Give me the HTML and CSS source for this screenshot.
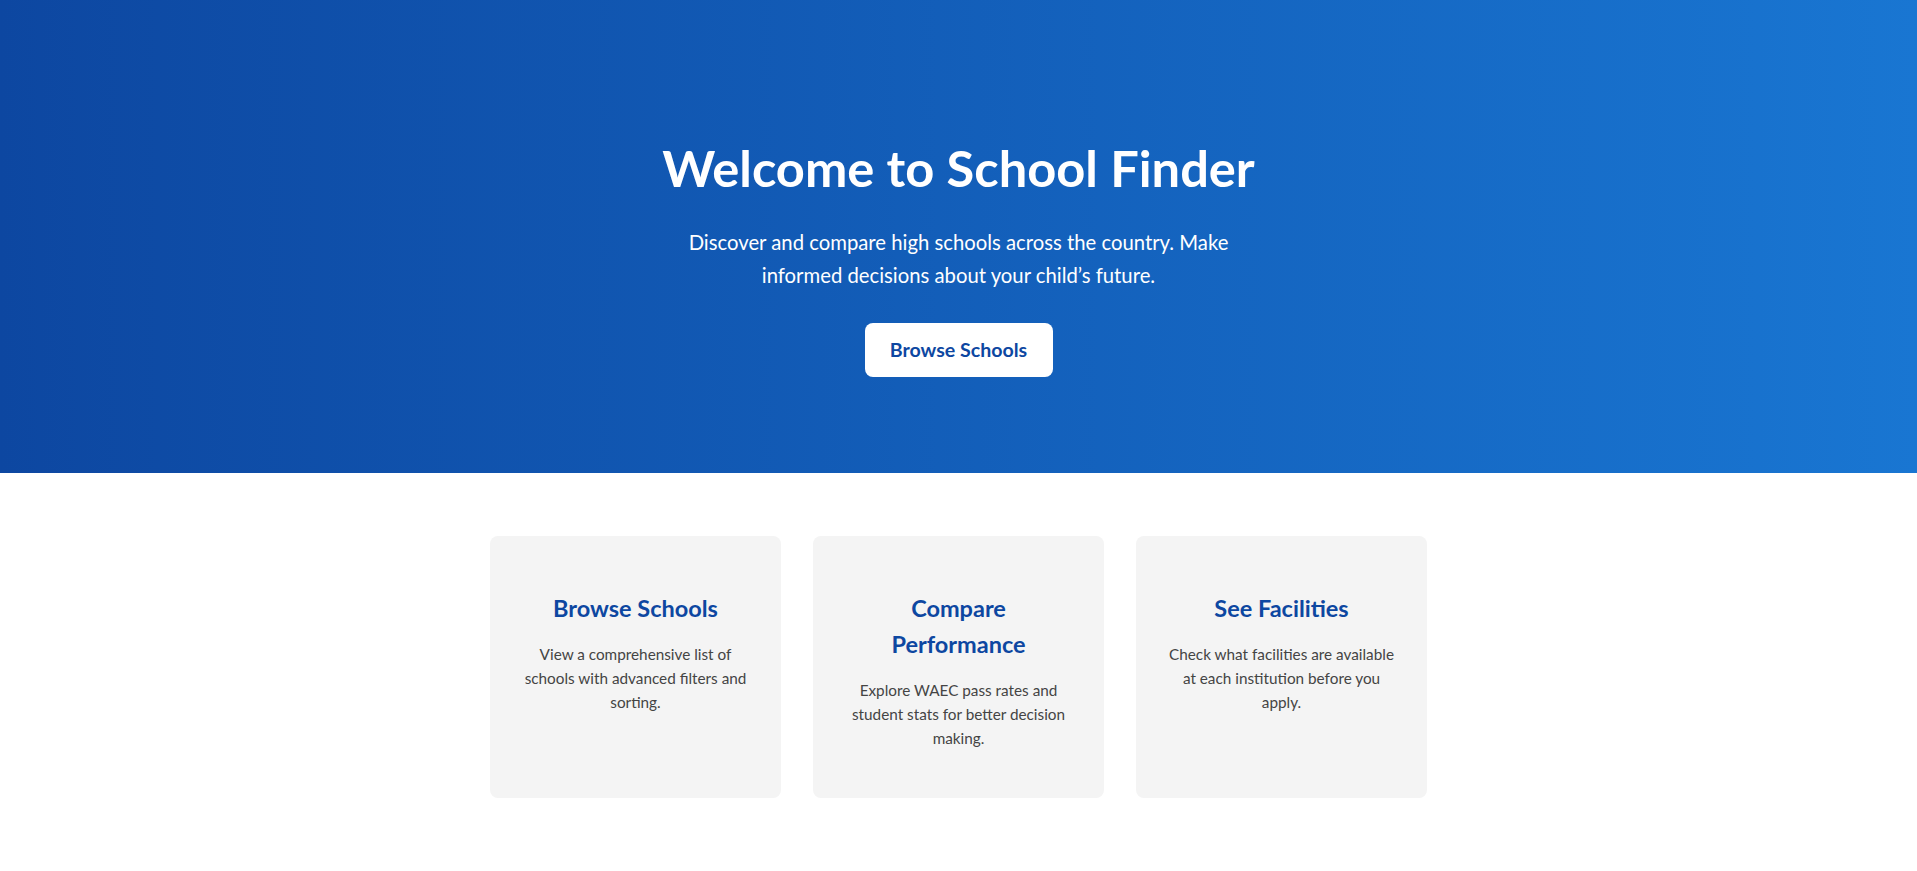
FILE: index.html
```html
<!DOCTYPE html>
<html lang="en">
<head>
<meta charset="utf-8">
<title>School Finder</title>
<link rel="stylesheet" href="styles.css">
</head>
<body>
<section class="hero">
  <h1 class="hero-title">Welcome to School Finder</h1>
  <p class="hero-text">Discover and compare high schools across the country. Make informed decisions about your child’s future.</p>
  <a class="hero-btn" href="#">Browse Schools</a>
</section>
<section class="features">
  <div class="feature-card">
    <h3 class="feature-title">Browse Schools</h3>
    <p class="feature-text">View a comprehensive list of schools with advanced filters and sorting.</p>
  </div>
  <div class="feature-card">
    <h3 class="feature-title">Compare Performance</h3>
    <p class="feature-text">Explore WAEC pass rates and student stats for better decision making.</p>
  </div>
  <div class="feature-card">
    <h3 class="feature-title">See Facilities</h3>
    <p class="feature-text">Check what facilities are available at each institution before you apply.</p>
  </div>
</section>
</body>
</html>
```
FILE: styles.css
```css
* { box-sizing: border-box; }
body {
  margin: 0;
  font-family: "Segoe UI", Lato, "Noto Sans", sans-serif;
  background: #fff;
  color: #333;
}
.hero {
  background: linear-gradient(to right, #0d47a1, #1976d2);
  color: #fff;
  text-align: center;
  padding: 138px 20px 96px;
  display: flex;
  flex-direction: column;
  align-items: center;
}
.hero-title {
  margin: 0;
  font-size: 50.6px;
  line-height: 60px;
  font-weight: 700;
}
.hero-text {
  margin: 28px 0 0;
  max-width: 600px;
  font-size: 20.3px;
  line-height: 33px;
}
.hero-btn {
  margin-top: 31px;
  display: inline-block;
  background: #fff;
  color: #0d47a1;
  text-decoration: none;
  font-weight: 700;
  font-size: 19.6px;
  line-height: 22px;
  padding: 16px 20px;
  width: 188px;
  border-radius: 8px;
}
.features {
  display: grid;
  grid-template-columns: repeat(3, 291px);
  gap: 32px;
  justify-content: center;
  padding: 63px 20px 74px;
}
.feature-card {
  background: #f4f4f4;
  border-radius: 8px;
  padding: 32px;
  text-align: center;
  min-height: 262px;
}
.feature-title {
  margin: 22px 0 16px;
  color: #0d47a1;
  font-size: 23.5px;
  line-height: 36px;
  font-weight: 700;
}
.feature-text {
  margin: 0 0 16px;
  color: #444;
  font-size: 15.3px;
  line-height: 24px;
}
```
